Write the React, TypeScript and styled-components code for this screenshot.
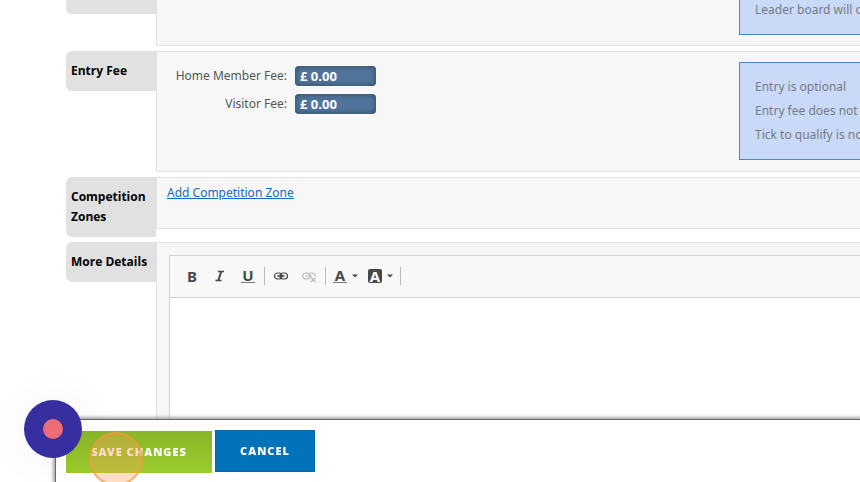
import React from "react";
import styled, { createGlobalStyle } from "styled-components";

const GlobalStyle = createGlobalStyle`
  *, *::before, *::after { box-sizing: border-box; }
  body {
    margin: 0;
    background: #fff;
    color: #555;
    font: 12px/20px "Noto Sans", "Open Sans", sans-serif;
  }
  button, input { font: inherit; }
`;

const Page = styled.main`
  height: 100vh;
  overflow: hidden;
`;

const Form = styled.form`
  display: flex;
  flex-direction: column;
  gap: 5px;
  min-width: 1030px;
  margin-top: -26px;
  padding-left: 66px;
`;

const Row = styled.section`
  display: flex;
  align-items: flex-start;
`;

const RowLabel = styled.h2`
  flex: 0 0 90px;
  min-height: 40px;
  margin: 0;
  padding: 10px 5px;
  border-radius: 6px 0 0 6px;
  background: #e1e1e1;
  color: #000;
  font-family: "Open Sans", sans-serif;
  font-size: 12px;
  font-weight: 700;
  line-height: 20px;
`;

const Panel = styled.div<{ $pad?: string }>`
  flex: 1;
  display: grid;
  grid-template-columns: minmax(0, 1fr) auto;
  align-items: start;
  min-height: 52px;
  padding: ${(p) => p.$pad ?? "10px"};
  border: 1px solid #e1e1e1;
  background: #f7f7f7;
`;

const Notes = styled.ul`
  grid-column: 2;
  width: 280px;
  margin: 0;
  padding: 12px 15px;
  border: 1px solid #4f86cb;
  background: #c9d9f8;
  color: #757b85;
  line-height: 24px;
  list-style: none;
  white-space: nowrap;
`;

const Fees = styled.div`
  display: grid;
  grid-template-columns: 115px 81px;
  grid-auto-rows: 28px;
  column-gap: 8px;
  align-items: center;
  padding-left: 5px;
`;

const FeeLabel = styled.label`
  justify-self: end;
  white-space: nowrap;
`;

const FeeInput = styled.input`
  width: 100%;
  height: 20px;
  padding: 0 5px;
  border: 0;
  border-radius: 4px;
  background: #50749b;
  box-shadow: inset 0 0 5px 1px #3a5069, 0 0 0 1px #fafafa;
  color: #fff;
  font-family: "Open Sans", sans-serif;
  font-size: 13px;
  font-weight: 700;
`;

const ZoneLink = styled.a`
  justify-self: start;
  color: #1768c4;
  text-decoration: underline;
`;

const Editor = styled.div`
  grid-column: 1 / -1;
  border: 1px solid #d1d1d1;
  background: #fff;
`;

const Toolbar = styled.div`
  display: flex;
  align-items: center;
  height: 42px;
  padding: 0 0 2px 8px;
  border-bottom: 1px solid #d1d1d1;
  background: #f8f8f8;
`;

const Tool = styled.button<{ $wide?: boolean }>`
  display: flex;
  align-items: center;
  justify-content: center;
  gap: 5px;
  width: ${(p) => (p.$wide ? "35px" : "28px")};
  height: 28px;
  padding: 0;
  border: 0;
  background: none;
  color: #484848;

  &:disabled { color: #484848; opacity: 0.35; }
`;

const Glyph = styled.span<{ $line?: boolean; $filled?: boolean }>`
  min-width: ${(p) => (p.$line || p.$filled ? "14px" : "0")};
  border-bottom: ${(p) => (p.$line ? "1px solid #777" : "0")};
  border-radius: ${(p) => (p.$filled ? "2px" : "0")};
  background: ${(p) => (p.$filled ? "#484848" : "none")};
  color: ${(p) => (p.$filled ? "#fff" : "inherit")};
  font-size: 15px;
  font-weight: 700;
  line-height: 14px;
  text-align: center;
`;

const Divider = styled.span`
  width: 1px;
  height: 18px;
  margin: 0 2px;
  background: #bcbcbc;
`;

const EditArea = styled.textarea`
  display: block;
  width: 100%;
  height: 200px;
  padding: 12px;
  border: 0;
  outline: 0;
  resize: none;
  background: #fff;
`;

const ActionBar = styled.footer`
  position: fixed;
  right: 0;
  bottom: 0;
  left: 55px;
  display: flex;
  align-items: flex-start;
  gap: 3px;
  height: 63px;
  padding: 10px;
  border-top: 1px solid #696969;
  border-left: 1px solid #696969;
  background: #fff;
  box-shadow: 0 0 3px 2px #aaa;
`;

const Action = styled.button<{ $primary?: boolean }>`
  width: ${(p) => (p.$primary ? "146px" : "100px")};
  height: 42px;
  margin-top: ${(p) => (p.$primary ? "1px" : "0")};
  padding: 0;
  border: ${(p) => (p.$primary ? "0" : "1px solid #0a68a8")};
  background: ${(p) => (p.$primary ? "linear-gradient(#8ab528, #9acd2b)" : "#0272bb")};
  color: #fff;
  font-size: 11px;
  font-weight: 900;
  letter-spacing: 1px;
  text-transform: uppercase;
`;

const RecordButton = styled.button`
  position: fixed;
  bottom: 24px;
  left: 24px;
  display: grid;
  place-items: center;
  width: 58px;
  height: 58px;
  padding: 0;
  border: 0;
  border-radius: 50%;
  background: #372f9f;
  box-shadow: 0 0 48px rgba(0, 0, 0, 0.06);

  &::before {
    content: "";
    width: 20px;
    height: 20px;
    border-radius: 50%;
    background: #ed6c76;
  }
`;

const ClickMarker = styled.span`
  position: fixed;
  bottom: -4px;
  left: 89px;
  width: 54px;
  height: 54px;
  border: 2px solid rgba(248, 148, 64, 0.7);
  border-radius: 50%;
  background: rgba(250, 160, 90, 0.36);
  pointer-events: none;
`;

const Caret = () => (
  <svg width="6" height="4" viewBox="0 0 6 4" aria-hidden="true">
    <path d="M0 0.5h6L3 3.5z" fill="currentColor" />
  </svg>
);

const ItalicIcon = () => (
  <svg width="10" height="12" viewBox="0 0 10 12" fill="none" stroke="currentColor" aria-hidden="true">
    <path d="M3 1.5h6M0.5 10.5h6" strokeWidth="1.5" />
    <path d="M6.2 1.5L3.4 10.5" strokeWidth="2" />
  </svg>
);

const LinkIcon = ({ broken }: { broken?: boolean }) => (
  <svg width="16" height="14" viewBox="0 0 16 14" fill="none" stroke="currentColor" aria-hidden="true">
    <rect x="1.5" y="4" width="7.5" height="6" rx="3" strokeWidth="1.2" />
    {broken ? (
      <>
        <path d="M4.5 7H11M7 5.5q1-1.5 3-1.5h1q3 0 3 3" strokeWidth="1.2" />
        <path d="M10 8.5l4.5 4.5M14.5 8.5L10 13" strokeWidth="1.2" />
      </>
    ) : (
      <>
        <rect x="7" y="4" width="7.5" height="6" rx="3" strokeWidth="1.2" />
        <path d="M4.5 7h7" strokeWidth="1.6" />
      </>
    )}
  </svg>
);

const fees = [
  { id: "home-fee", label: "Home Member Fee:" },
  { id: "visitor-fee", label: "Visitor Fee:" },
];

export default function App() {
  return (
    <Page>
      <GlobalStyle />
      <Form>
        <Row>
          <RowLabel />
          <Panel>
            <Notes>
              <li>Leader board will only be shown</li>
            </Notes>
          </Panel>
        </Row>

        <Row>
          <RowLabel>Entry Fee</RowLabel>
          <Panel $pad="10px 10px 11px">
            <Fees>
              {fees.map((fee) => (
                <React.Fragment key={fee.id}>
                  <FeeLabel htmlFor={fee.id}>{fee.label}</FeeLabel>
                  <FeeInput id={fee.id} defaultValue="£ 0.00" />
                </React.Fragment>
              ))}
            </Fees>
            <Notes>
              <li>Entry is optional</li>
              <li>Entry fee does not apply</li>
              <li>Tick to qualify is not required</li>
            </Notes>
          </Panel>
        </Row>

        <Row>
          <RowLabel>Competition Zones</RowLabel>
          <Panel $pad="5px 10px">
            <ZoneLink href="#zones">Add Competition Zone</ZoneLink>
          </Panel>
        </Row>

        <Row>
          <RowLabel>More Details</RowLabel>
          <Panel $pad="12px">
            <Editor>
              <Toolbar>
                <Tool type="button" aria-label="Bold"><Glyph>B</Glyph></Tool>
                <Tool type="button" aria-label="Italic"><ItalicIcon /></Tool>
                <Tool type="button" aria-label="Underline"><Glyph $line>U</Glyph></Tool>
                <Divider />
                <Tool type="button" aria-label="Link"><LinkIcon /></Tool>
                <Tool type="button" aria-label="Unlink" disabled><LinkIcon broken /></Tool>
                <Divider />
                <Tool type="button" $wide aria-label="Text colour"><Glyph $line>A</Glyph><Caret /></Tool>
                <Tool type="button" $wide aria-label="Background colour"><Glyph $filled>A</Glyph><Caret /></Tool>
                <Divider />
              </Toolbar>
              <EditArea aria-label="More Details" />
            </Editor>
          </Panel>
        </Row>
      </Form>

      <ActionBar>
        <Action type="button" $primary>Save Changes</Action>
        <Action type="button">Cancel</Action>
      </ActionBar>
      <RecordButton type="button" aria-label="Record" />
      <ClickMarker />
    </Page>
  );
}
